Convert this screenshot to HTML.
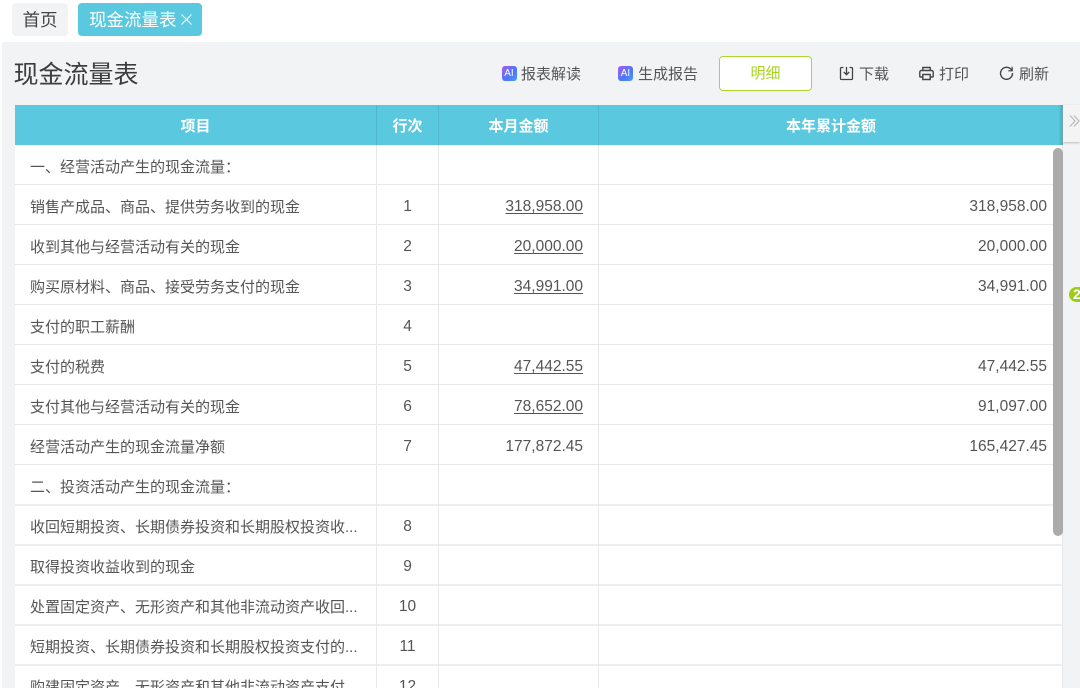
<!DOCTYPE html>
<html><head><meta charset="utf-8">
<style>
html,body{margin:0;padding:0;}
body{width:1080px;height:688px;overflow:hidden;position:relative;background:#fff;font-family:"Liberation Sans","Noto Sans CJK SC",sans-serif;color:#555;}
.abs{position:absolute;white-space:nowrap;}
#bg{position:absolute;left:2px;top:42px;width:1078px;height:646px;background:#f2f3f5;}
#tab1{position:absolute;left:12px;top:3px;width:56px;height:33px;background:#f2f3f5;border-radius:4px;color:#444;font-size:17.5px;line-height:35px;text-align:center;}
#tab2{position:absolute;left:78px;top:3px;width:124px;height:33px;background:#5ac8de;border-radius:4px;color:#fff;font-size:17.5px;line-height:35px;}
#tab2 span{position:absolute;left:11px;top:0;}
#title{left:13.500px;top:57px;font-size:25px;line-height:36px;color:#3d3d3d;}
.tb{font-size:15px;line-height:20px;color:#555;top:65px;}
.ai{position:absolute;top:66px;width:15px;height:15px;border-radius:3px;background:linear-gradient(135deg,#a45ef0,#4a78f8 60%,#4d9bfa);color:#fff;font-size:10px;line-height:15px;text-align:center;}
#mx{position:absolute;left:719px;top:56px;width:91px;height:33px;border:1px solid #add62f;border-radius:4px;background:#fff;color:#a8d42a;font-size:15px;line-height:33px;text-align:center;}
#table{position:absolute;left:15px;top:105px;width:1048px;height:583px;background:#fff;overflow:hidden;}
#head{position:absolute;left:0;top:0;width:1048px;height:40px;background:#5ac8de;color:#fff;font-weight:bold;font-size:15px;line-height:44px;}
#head div{position:absolute;top:0;height:40px;text-align:center;}
#head i{position:absolute;top:0;width:1px;height:40px;background:#50b8cd;}
.row{position:absolute;left:0;width:1048px;height:40px;border-bottom:1px solid #e6e8eb;box-sizing:content-box;}
.row.t{border-bottom:2px solid #eceef0;}
.vl{position:absolute;top:40px;width:1px;height:560px;background:#e6e8eb;}
.c1,.c2,.c3,.c4{position:absolute;top:0;height:40px;line-height:48px;font-size:15px;color:#555;white-space:nowrap;}
.c1{left:15px;}
.c2{left:362px;width:61px;text-align:center;font-size:15.5px;line-height:45px;}
.c3{right:480px;font-size:15.5px;line-height:45px;}
.c4{right:16px;font-size:15.5px;line-height:45px;}
.c3 u{text-decoration:underline;text-underline-offset:2px;}
#sb{position:absolute;left:1053px;top:148px;width:10px;height:388px;background:#ababab;border-radius:5px;}
#shadow{position:absolute;left:1059px;top:105px;width:4px;height:40px;background:linear-gradient(90deg,#5ac8de,#4a9cae);}
#coll{position:absolute;left:1063px;top:105px;width:17px;height:37px;background:#f4f4f5;box-shadow:0 1px 2px #bbb;}
#badge{position:absolute;left:1069px;top:287px;width:20px;height:15px;background:#9ccc14;border-radius:8px;color:#fff;font-size:14px;font-weight:bold;line-height:15px;padding-left:4px;box-sizing:border-box;}
</style></head>
<body>
<div id="tab1">首页</div>
<div id="tab2"><span>现金流量表</span>
<svg style="position:absolute;left:103px;top:11px" width="11" height="11" viewBox="0 0 11 11"><path d="M.5 .5L10.500 10.500M10.500 .5L.5 10.500" stroke="#fff" stroke-width="1.1" fill="none"/></svg></div>
<div id="bg"></div>
<div class="abs" id="title">现金流量表</div>

<div class="ai" style="left:501.500px">AI</div>
<div class="abs tb" style="left:521px">报表解读</div>
<div class="ai" style="left:618px">AI</div>
<div class="abs tb" style="left:638px">生成报告</div>
<div id="mx">明细</div>

<svg class="abs" style="left:839px;top:66px" width="15" height="15" viewBox="0 0 15 15" fill="none" stroke="#444" stroke-width="1.3"><path d="M4.500 1.500H2.500A1 1 0 0 0 1.500 2.500V12.500A1 1 0 0 0 2.500 13.500H12.500A1 1 0 0 0 13.500 12.500V2.500A1 1 0 0 0 12.500 1.500H10.500"/><path d="M7.500 1V8.500M4.800 6L7.500 8.700L10.200 6"/></svg>
<div class="abs tb" style="left:859px">下载</div>
<svg class="abs" style="left:919px;top:66px" width="15" height="15" viewBox="0 0 15 15" fill="none" stroke="#444" stroke-width="1.4"><path d="M3.800 4.500V1.500H11.200V4.500"/><path d="M3.500 11H1.500A.8 .8 0 0 1 .8 10.200V6A1.500 1.500 0 0 1 2.300 4.500H12.700A1.500 1.500 0 0 1 14.200 6V10.200A.8 .8 0 0 1 13.500 11H11.500"/><path d="M3.800 8.500H11.200V13.500H3.800Z"/></svg>
<div class="abs tb" style="left:939px">打印</div>
<svg class="abs" style="left:999px;top:65px" width="15" height="15" viewBox="0 0 15 15" fill="none" stroke="#444" stroke-width="1.4"><path d="M12.800 5.500A6 6 0 1 0 13.500 8"/><path d="M13.200 1.800V5.800H9.300" stroke-width="1.200"/></svg>
<div class="abs tb" style="left:1019px">刷新</div>

<div id="table">
<div id="head">
<div style="left:0;width:361px">项目</div><i style="left:361px"></i>
<div style="left:362px;width:61px">行次</div><i style="left:423px"></i>
<div style="left:424px;width:159px">本月金额</div><i style="left:583px"></i>
<div style="left:584px;width:464px">本年累计金额</div>
</div>
<div class="row" style="top:39px"><div class="c1">一、经营活动产生的现金流量：</div></div>
<div class="row" style="top:79px"><div class="c1">销售产成品、商品、提供劳务收到的现金</div><div class="c2">1</div><div class="c3"><u>318,958.00</u></div><div class="c4">318,958.00</div></div>
<div class="row" style="top:119px"><div class="c1">收到其他与经营活动有关的现金</div><div class="c2">2</div><div class="c3"><u>20,000.00</u></div><div class="c4">20,000.00</div></div>
<div class="row" style="top:159px"><div class="c1">购买原材料、商品、接受劳务支付的现金</div><div class="c2">3</div><div class="c3"><u>34,991.00</u></div><div class="c4">34,991.00</div></div>
<div class="row" style="top:199px"><div class="c1">支付的职工薪酬</div><div class="c2">4</div></div>
<div class="row" style="top:239px"><div class="c1">支付的税费</div><div class="c2">5</div><div class="c3"><u>47,442.55</u></div><div class="c4">47,442.55</div></div>
<div class="row" style="top:279px"><div class="c1">支付其他与经营活动有关的现金</div><div class="c2">6</div><div class="c3"><u>78,652.00</u></div><div class="c4">91,097.00</div></div>
<div class="row" style="top:319px"><div class="c1">经营活动产生的现金流量净额</div><div class="c2">7</div><div class="c3">177,872.45</div><div class="c4">165,427.45</div></div>
<div class="row t" style="top:359px"><div class="c1">二、投资活动产生的现金流量：</div></div>
<div class="row t" style="top:399px"><div class="c1">收回短期投资、长期债券投资和长期股权投资收...</div><div class="c2">8</div></div>
<div class="row t" style="top:439px"><div class="c1">取得投资收益收到的现金</div><div class="c2">9</div></div>
<div class="row t" style="top:479px"><div class="c1">处置固定资产、无形资产和其他非流动资产收回...</div><div class="c2">10</div></div>
<div class="row t" style="top:519px"><div class="c1">短期投资、长期债券投资和长期股权投资支付的...</div><div class="c2">11</div></div>
<div class="row" style="top:559px"><div class="c1">购建固定资产、无形资产和其他非流动资产支付...</div><div class="c2">12</div></div>
<div class="vl" style="left:361px"></div>
<div class="vl" style="left:423px"></div>
<div class="vl" style="left:583px"></div>
<div class="vl" style="left:1047px"></div>
</div>

<div id="shadow"></div>
<div id="sb"></div>
<div id="coll"><svg style="position:absolute;left:6px;top:9px" width="11" height="15" viewBox="0 0 11 15" fill="none" stroke="#b9b9b9" stroke-width="1.2"><path d="M1 1.500L6 7L1 12.500M5 1.500L10 7L5 12.500"/></svg></div>
<div id="badge">2</div>
</body></html>
